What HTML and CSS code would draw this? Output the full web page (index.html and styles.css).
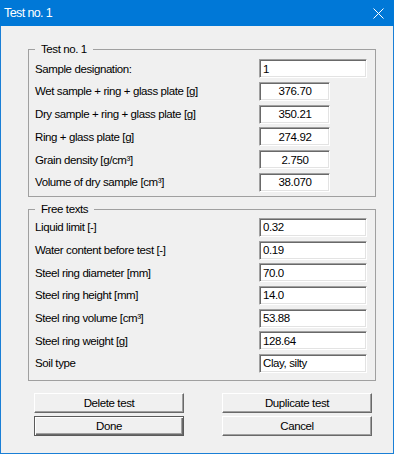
FILE: index.html
```html
<!DOCTYPE html>
<html lang="en">

<head>
  <meta charset="utf8">
  <meta name="viewport" content="width=device-width, initial-scale=1.0">
  <title>Test no. 1</title>
  <link rel="stylesheet" href="styles.css">
</head>

<body>
  <div class="window">
    <div class="titlebar">
      <span class="title">Test no. 1</span>
      <svg class="close" width="11" height="11" viewBox="0 0 11 11">
        <path d="M0.5 0.5 L10.5 10.5 M10.5 0.5 L0.5 10.5" stroke="#fff" stroke-width="1" fill="none" />
      </svg>
    </div>

    <div class="client">
      <fieldset class="group test">
        <legend>Test no. 1</legend>
        <div class="rows">
          <label>Sample designation:</label>
          <input class="edit" value="1">
          <label>Wet sample + ring + glass plate [g]</label>
          <input class="edit short" value="376.70">
          <label>Dry sample + ring + glass plate [g]</label>
          <input class="edit short" value="350.21">
          <label>Ring + glass plate [g]</label>
          <input class="edit short" value="274.92">
          <label>Grain density [g/cm³]</label>
          <input class="edit short" value="2.750">
          <label>Volume of dry sample [cm³]</label>
          <input class="edit short" value="38.070">
        </div>
      </fieldset>

      <fieldset class="group free">
        <legend>Free texts</legend>
        <div class="rows">
          <label>Liquid limit [-]</label>
          <input class="edit" value="0.32">
          <label>Water content before test [-]</label>
          <input class="edit" value="0.19">
          <label>Steel ring diameter [mm]</label>
          <input class="edit" value="70.0">
          <label>Steel ring height [mm]</label>
          <input class="edit" value="14.0">
          <label>Steel ring volume [cm³]</label>
          <input class="edit" value="53.88">
          <label>Steel ring weight [g]</label>
          <input class="edit" value="128.64">
          <label>Soil type</label>
          <input class="edit" value="Clay, silty">
        </div>
      </fieldset>

      <div class="buttons">
        <button>Delete test</button>
        <button>Duplicate test</button>
        <button class="default">Done</button>
        <button>Cancel</button>
      </div>
    </div>
  </div>
</body>

</html>
```

FILE: styles.css
```css
html,
body {
  height: 100%;
  margin: 0;
}

body {
  background-color: #fff;
  font-family: 'Liberation Sans', Arial, sans-serif;
  font-size: 11.5px;
  letter-spacing: -0.4px;
  color: #000;
}

.window {
  box-sizing: border-box;
  width: 394px;
  height: 454px;
  border: 1px solid #1a7fd6;
  border-top: 0;
  background-color: #f0f0f0;
}

.titlebar {
  height: 26px;
  margin: 0 -1px;
  padding: 0 10px 0 4px;
  display: flex;
  align-items: center;
  justify-content: space-between;
  background-color: #0078d7;
  color: #fff;
}

.title {
  font-size: 12.5px;
  letter-spacing: -0.6px;
}

.close {
  display: block;
  margin-top: 1px;
}

.client {
  padding: 0 17px 0 27px;
}

.group {
  margin: 0;
  border: 1px solid #a0a0a0;
  padding: 3px 8px 4px 6px;
}

.group legend {
  padding: 0 6px;
  line-height: 13px;
}

.test {
  margin-top: 17px;
}

.free {
  margin-top: 6px;
  padding-top: 2px;
  padding-bottom: 7px;
}

.rows {
  display: grid;
  grid-template-columns: 1fr 108px;
  align-items: center;
  row-gap: 3.8px;
}

.free .rows {
  row-gap: 3.67px;
}

.edit {
  box-sizing: border-box;
  width: 108px;
  height: 19px;
  margin: 0;
  padding: 0 2px 0 3px;
  border: 1px solid;
  border-color: #a0a0a0 #fff #fff #a0a0a0;
  box-shadow: inset 1px 1px #696969, inset -1px -1px #e3e3e3;
  background-color: #fff;
  font: inherit;
  letter-spacing: inherit;
  color: #000;
  outline: none;
}

.edit.short {
  width: 71px;
  text-align: center;
}

.buttons {
  margin: 12px 0 0 6px;
  display: grid;
  grid-template-columns: 150px 150px;
  column-gap: 38px;
  row-gap: 3px;
}

.buttons button {
  height: 20px;
  margin: 0;
  padding: 0;
  border: 1px solid;
  border-color: #fff #696969 #696969 #fff;
  box-shadow: inset -1px -1px #a0a0a0;
  background-color: #f0f0f0;
  font: inherit;
  letter-spacing: inherit;
  color: #000;
}

.buttons button.default {
  border-color: #5a5a5a;
  box-shadow: inset 1px 1px #fff, inset -1px -1px #696969, inset -2px -2px #a0a0a0;
}
```
